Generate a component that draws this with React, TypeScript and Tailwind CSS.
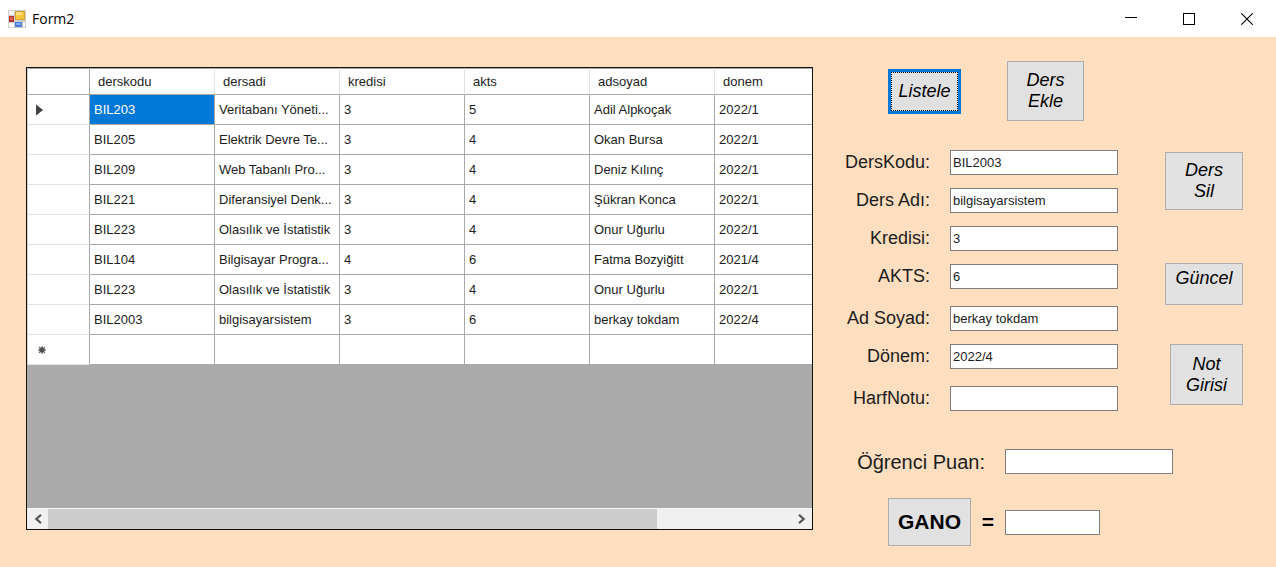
import React, { useState } from "react";

const columns = ["derskodu", "dersadi", "kredisi", "akts", "adsoyad", "donem"];

const courses = [
  ["BIL203", "Veritabanı Yöneti...", "3", "5", "Adil Alpkoçak", "2022/1"],
  ["BIL205", "Elektrik Devre Te...", "3", "4", "Okan Bursa", "2022/1"],
  ["BIL209", "Web Tabanlı Pro...", "3", "4", "Deniz Kılınç", "2022/1"],
  ["BIL221", "Diferansiyel Denk...", "3", "4", "Şükran Konca", "2022/1"],
  ["BIL223", "Olasılık ve İstatistik", "3", "4", "Onur Uğurlu", "2022/1"],
  ["BIL104", "Bilgisayar Progra...", "4", "6", "Fatma Bozyiğitt", "2021/4"],
  ["BIL223", "Olasılık ve İstatistik", "3", "4", "Onur Uğurlu", "2022/1"],
  ["BIL2003", "bilgisayarsistem", "3", "6", "berkay tokdam", "2022/4"],
];

const fieldGroups = [
  [
    { id: "derskodu", label: "DersKodu:", value: "BIL2003" },
    { id: "dersadi", label: "Ders Adı:", value: "bilgisayarsistem" },
    { id: "kredisi", label: "Kredisi:", value: "3" },
    { id: "akts", label: "AKTS:", value: "6" },
  ],
  [
    { id: "adsoyad", label: "Ad Soyad:", value: "berkay tokdam" },
    { id: "donem", label: "Dönem:", value: "2022/4" },
  ],
  [{ id: "harfnotu", label: "HarfNotu:", value: "" }],
];

const inputClass =
  "h-[25px] border border-[#7f7f7f] bg-white px-[2px] text-[13px] leading-[16px] text-[#1c1c1c] outline-none";
const buttonClass =
  "shrink-0 border border-[#adadad] bg-[#e1e1e1] text-[18px] leading-[21px] italic text-black";

function FormIcon() {
  return (
    <svg width="18" height="18" viewBox="0 0 18 18" aria-hidden="true">
      <rect width="18" height="18" fill="#cfcfcf" />
      <rect x="1" y="1" width="5" height="4" fill="#f4f4f4" />
      <rect x="1" y="13" width="5" height="4" fill="#fff" />
      <rect x="15" y="12" width="2" height="5" fill="#f4f4f4" />
      <rect x="1" y="6" width="5" height="6" fill="#b8322c" />
      <rect x="2" y="7" width="3" height="3" fill="#d4605a" />
      <rect x="7" y="1" width="10" height="9" fill="#d9a02a" />
      <rect x="8" y="2" width="8" height="7" fill="#fac63c" />
      <rect x="8" y="2" width="6" height="3" fill="#ffdf80" />
      <rect x="7" y="12" width="7" height="5" fill="#4a7fdc" />
      <rect x="8" y="13" width="5" height="2" fill="#7fa9f0" />
    </svg>
  );
}

function TitleBar() {
  return (
    <header className="flex h-[37px] items-center bg-white pl-2">
      <FormIcon />
      <h1 className="flex-1 pl-[6px] font-['Open_Sans','Noto_Sans',sans-serif] text-[14px] leading-5 text-black">
        Form2
      </h1>
      <button aria-label="Simge durumuna küçült" className="flex h-full w-[58px] items-center justify-center">
        <svg width="12" height="12" viewBox="0 0 12 12" shapeRendering="crispEdges">
          <path d="M0 4.5H12" stroke="#000" />
        </svg>
      </button>
      <button aria-label="Ekranı kapla" className="flex h-full w-[58px] items-center justify-center">
        <svg width="12" height="12" viewBox="0 0 12 12" shapeRendering="crispEdges">
          <rect x="0.5" y="0.5" width="11" height="11" fill="none" stroke="#000" />
        </svg>
      </button>
      <button aria-label="Kapat" className="flex h-full w-[58px] items-center justify-center">
        <svg width="12" height="12" viewBox="0 0 12 12">
          <path d="M0.3 0.3L11.7 11.7M11.7 0.3L0.3 11.7" stroke="#000" strokeWidth="1.1" />
        </svg>
      </button>
    </header>
  );
}

function ScrollBar() {
  return (
    <div className="flex h-[21px] border-t border-[#f8f8f8] bg-[#f0f0f0]">
      <button aria-label="Sola kaydır" className="flex w-[21px] items-center justify-center">
        <svg width="8" height="10" viewBox="0 0 8 10">
          <path d="M7 0.8L2.4 5L7 9.2" fill="none" stroke="#555" strokeWidth="2.2" />
        </svg>
      </button>
      <div className="flex-1">
        <div className="h-full w-[82%] bg-[#cdcdcd]" />
      </div>
      <button aria-label="Sağa kaydır" className="flex w-[21px] items-center justify-center">
        <svg width="8" height="10" viewBox="0 0 8 10">
          <path d="M1 0.8L5.6 5L1 9.2" fill="none" stroke="#555" strokeWidth="2.2" />
        </svg>
      </button>
    </div>
  );
}

function CourseGrid() {
  return (
    <section className="flex min-w-0 flex-1 flex-col border border-[#111] bg-[#ababab]">
      <div className="flex-1 overflow-hidden">
        <table className="w-[813px] table-fixed border-separate border-spacing-0 bg-white text-left text-[13px] leading-[16px] text-[#1c1c1c]">
          <colgroup>
            <col className="w-[63px]" />
            {columns.map((c) => (
              <col key={c} className="w-[125px]" />
            ))}
          </colgroup>
          <thead>
            <tr className="h-[27px]">
              <th aria-label="Satır" className="border-r border-b border-t border-l border-[#a8a8a8] border-l-[#d0d0d0] p-0" />
              {columns.map((c) => (
                <th
                  key={c}
                  className="border-t border-r border-b border-[#a8a8a8] border-r-[#e2e2e2] py-0 pl-2 font-normal"
                >
                  {c}
                </th>
              ))}
            </tr>
          </thead>
          <tbody>
            {courses.map((row, r) => (
              <tr key={r} className="h-[30px]">
                <th
                  aria-label={`Satır ${r + 1}`}
                  className="border-r border-b border-l border-[#e2e2e2] border-r-[#a8a8a8] border-l-[#d0d0d0] py-0 pl-2"
                >
                  {r === 0 && (
                    <svg width="7" height="12" viewBox="0 0 7 12" className="block">
                      <path d="M0 0.5L7 6L0 11.5Z" fill="#404040" />
                    </svg>
                  )}
                </th>
                {row.map((cell, c) => (
                  <td
                    key={c}
                    className={
                      r === 0 && c === 0
                        ? "border-r border-b border-[#a8a8a8] bg-[#0078d7] py-0 pl-1 whitespace-nowrap text-white"
                        : "border-r border-b border-[#a8a8a8] py-0 pl-1 whitespace-nowrap"
                    }
                  >
                    {cell}
                  </td>
                ))}
              </tr>
            ))}
            <tr className="h-[30px]">
              <th
                aria-label="Yeni satır"
                className="border-r border-b border-l border-[#e2e2e2] border-r-[#a8a8a8] border-l-[#d0d0d0] py-0 pl-[10px]"
              >
                <svg width="8" height="8" viewBox="0 0 8 8" className="block">
                  <circle cx="4" cy="4" r="2.4" fill="#404040" />
                  <path d="M4 0.3V7.7M0.3 4H7.7M1.2 1.2L6.8 6.8M6.8 1.2L1.2 6.8" stroke="#505050" strokeWidth="1.3" />
                </svg>
              </th>
              {columns.map((c) => (
                <td key={c} className="border-r border-b border-[#a8a8a8] p-0" />
              ))}
            </tr>
          </tbody>
        </table>
      </div>
      <ScrollBar />
    </section>
  );
}

function CourseFields() {
  const [values, setValues] = useState<Record<string, string>>(
    Object.fromEntries(fieldGroups.flat().map((f) => [f.id, f.value])),
  );
  return (
    <div className="flex flex-col gap-[17px]">
      {fieldGroups.map((group, i) => (
        <div key={i} className="flex flex-col gap-[13px]">
          {group.map((f) => (
            <div key={f.id} className="flex items-center gap-5">
              <label htmlFor={f.id} className="w-[85px] text-right text-[18px] leading-[21px] whitespace-nowrap">
                {f.label}
              </label>
              <input
                id={f.id}
                value={values[f.id]}
                onChange={(e) => setValues({ ...values, [f.id]: e.target.value })}
                className={`w-[168px] ${inputClass}`}
              />
            </div>
          ))}
        </div>
      ))}
    </div>
  );
}

export default function App() {
  return (
    <div className="flex min-h-screen flex-col bg-[#ffdfc0] font-['Liberation_Sans',Arial,sans-serif] text-[#1c1c1c]">
      <TitleBar />
      <main className="flex flex-1 gap-8 pr-[33px] pl-[26px]">
        <div className="flex min-w-0 flex-1 pt-[30px] pb-[37px]">
          <CourseGrid />
        </div>
        <div className="flex w-[398px] shrink-0 flex-col pt-6 pb-5">
          <div className="flex items-center gap-[46px] pl-[43px]">
            <button className="h-[45px] w-[73px] border-3 border-[#0078d7] bg-[#e1e1e1] text-[18px] leading-[21px] text-black italic">
              <span className="flex h-full items-center justify-center border border-dotted border-black">
                Listele
              </span>
            </button>
            <button className={`h-[60px] w-[77px] px-3 ${buttonClass}`}>Ders Ekle</button>
          </div>

          <div className="flex justify-between pt-[29px]">
            <CourseFields />
            <div className="flex flex-col items-end pt-0.5">
              <button className={`h-[58px] w-[78px] px-3 ${buttonClass}`}>Ders Sil</button>
              <button className={`mt-[53px] flex h-[42px] w-[78px] justify-center pt-1 ${buttonClass}`}>
                Güncel
              </button>
              <button className={`mt-[39px] h-[61px] w-[73px] px-3 ${buttonClass}`}>Not Girisi</button>
            </div>
          </div>

          <div className="flex items-center gap-5 pt-[38px]">
            <label htmlFor="puan" className="w-[140px] text-right text-[20px] leading-6 whitespace-nowrap">
              Öğrenci Puan:
            </label>
            <input id="puan" className={`w-[168px] ${inputClass}`} />
          </div>

          <div className="flex items-center pt-6 pl-[43px]">
            <button className="h-12 w-[83px] border border-[#adadad] bg-[#e1e1e1] text-[21px] leading-6 font-bold text-black">
              GANO
            </button>
            <label htmlFor="gano" className="w-[34px] text-center text-[21px] leading-6 font-bold text-black">
              =
            </label>
            <input id="gano" aria-label="GANO" className={`w-[95px] ${inputClass}`} />
          </div>
        </div>
      </main>
    </div>
  );
}
